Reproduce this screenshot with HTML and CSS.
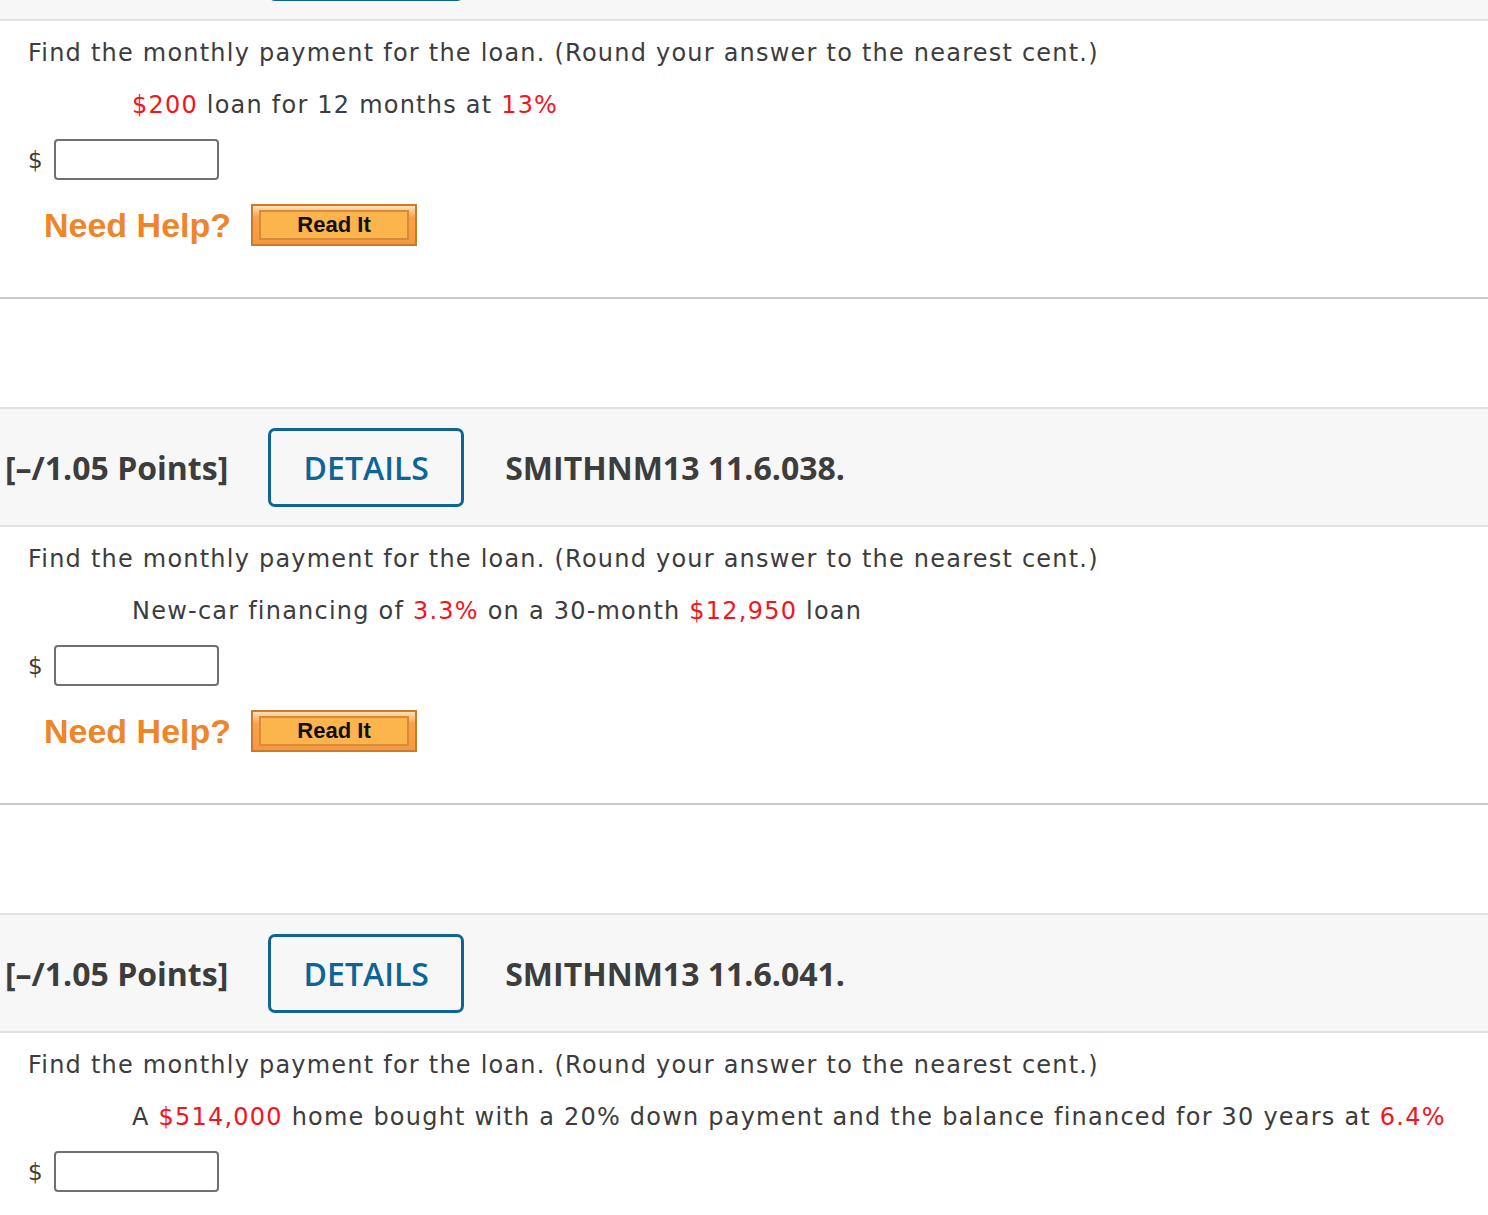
FILE: index.html
```html
<!DOCTYPE html>
<html>
<head>
<meta charset="utf-8">
<link rel="stylesheet" href="styles.css">
</head>
<body>
<div class="question first">
  <div class="qhead">
    <span class="points">[–/1.05 Points]</span>
    <span class="details">DETAILS</span>
    <span class="qid">SMITHNM13 11.6.035.</span>
  </div>
  <div class="qbody">
    <p class="prompt">Find the monthly payment for the loan. (Round your answer to the nearest cent.)</p>
    <p class="given"><span class="red">$200</span> loan for 12 months at <span class="red">13%</span></p>
    <div class="answer"><span class="dollar">$</span><input class="box" type="text"></div>
    <div class="help"><span class="need">Need Help?</span><span class="readit"><span class="readit-inner">Read It</span></span></div>
  </div>
</div>

<div class="question">
  <div class="qhead">
    <span class="points">[–/1.05 Points]</span>
    <span class="details">DETAILS</span>
    <span class="qid">SMITHNM13 11.6.038.</span>
  </div>
  <div class="qbody">
    <p class="prompt">Find the monthly payment for the loan. (Round your answer to the nearest cent.)</p>
    <p class="given">New-car financing of <span class="red">3.3%</span> on a 30-month <span class="red">$12,950</span> loan</p>
    <div class="answer"><span class="dollar">$</span><input class="box" type="text"></div>
    <div class="help"><span class="need">Need Help?</span><span class="readit"><span class="readit-inner">Read It</span></span></div>
  </div>
</div>

<div class="question last">
  <div class="qhead">
    <span class="points">[–/1.05 Points]</span>
    <span class="details">DETAILS</span>
    <span class="qid">SMITHNM13 11.6.041.</span>
  </div>
  <div class="qbody">
    <p class="prompt">Find the monthly payment for the loan. (Round your answer to the nearest cent.)</p>
    <p class="given">A <span class="red">$514,000</span> home bought with a 20% down payment and the balance financed for 30 years at <span class="red">6.4%</span></p>
    <div class="answer"><span class="dollar">$</span><input class="box" type="text"></div>
  </div>
</div>
</body>
</html>
```

FILE: styles.css
```css
html, body {
  margin: 0;
  padding: 0;
  background: #ffffff;
}
body {
  font-family: "DejaVu Sans", Verdana, sans-serif;
  color: #3c3c3c;
  overflow: hidden;
}
.question {
  margin-top: 108px;
}
.question.first {
  margin-top: -99px;
}
.qhead {
  height: 120px;
  box-sizing: border-box;
  background: #f7f7f7;
  border-top: 2px solid #e2e2e2;
  border-bottom: 2px solid #e2e2e2;
  display: flex;
  align-items: center;
  padding-left: 5px;
  font-family: "Open Sans", sans-serif;
  color: #3d3d3d;
}
.points {
  font-weight: 700;
  font-size: 32px;
}
.details {
  margin-left: 40px;
  width: 196px;
  height: 79px;
  box-sizing: border-box;
  border: 3px solid #0f6496;
  border-radius: 7px;
  color: #0f6496;
  font-size: 32px;
  font-weight: 600;
  display: flex;
  align-items: center;
  justify-content: center;
}
.qid {
  margin-left: 41px;
  font-weight: 700;
  font-size: 32px;
}
.qbody {
  padding: 16px 0 0 28px;
  border-bottom: 2px solid #cacaca;
  height: 278px;
  box-sizing: border-box;
}
.question.last .qbody {
  border-bottom: none;
  height: auto;
}
.prompt {
  margin: 0;
  font-size: 24px;
  letter-spacing: 1.22px;
  line-height: 32px;
  white-space: nowrap;
}
.given {
  margin: 20px 0 0 104px;
  font-size: 24px;
  letter-spacing: 1.22px;
  line-height: 32px;
  white-space: nowrap;
}
.red {
  color: #f5141e;
}
.answer {
  margin-top: 18px;
  display: flex;
  align-items: center;
  height: 41px;
}
.dollar {
  font-size: 23px;
  width: 26px;
}
.box {
  width: 165px;
  height: 41px;
  box-sizing: border-box;
  border: 2px solid #707070;
  border-radius: 4px;
  margin: 0;
  padding: 0;
  background: #fff;
}
.help {
  margin-top: 24px;
  padding-left: 16px;
  display: flex;
  align-items: center;
  height: 42px;
}
.need {
  font-family: "Liberation Sans", Arial, sans-serif;
  font-weight: 700;
  font-size: 34px;
  color: #ee8529;
}
.readit {
  margin-left: 20px;
  width: 166px;
  height: 42px;
  box-sizing: border-box;
  border: 2px solid #c97a2e;
  background: linear-gradient(#fde0b8, #f7a24a 30%, #f59a3c);
  padding: 4px 6px 4px 6px;
  display: flex;
}
.readit-inner {
  flex: 1;
  border: 2px solid #d8893a;
  background: #fbb54c;
  display: flex;
  align-items: center;
  justify-content: center;
  font-family: "Liberation Sans", Arial, sans-serif;
  font-weight: 700;
  font-size: 22px;
  color: #111008;
}
```
